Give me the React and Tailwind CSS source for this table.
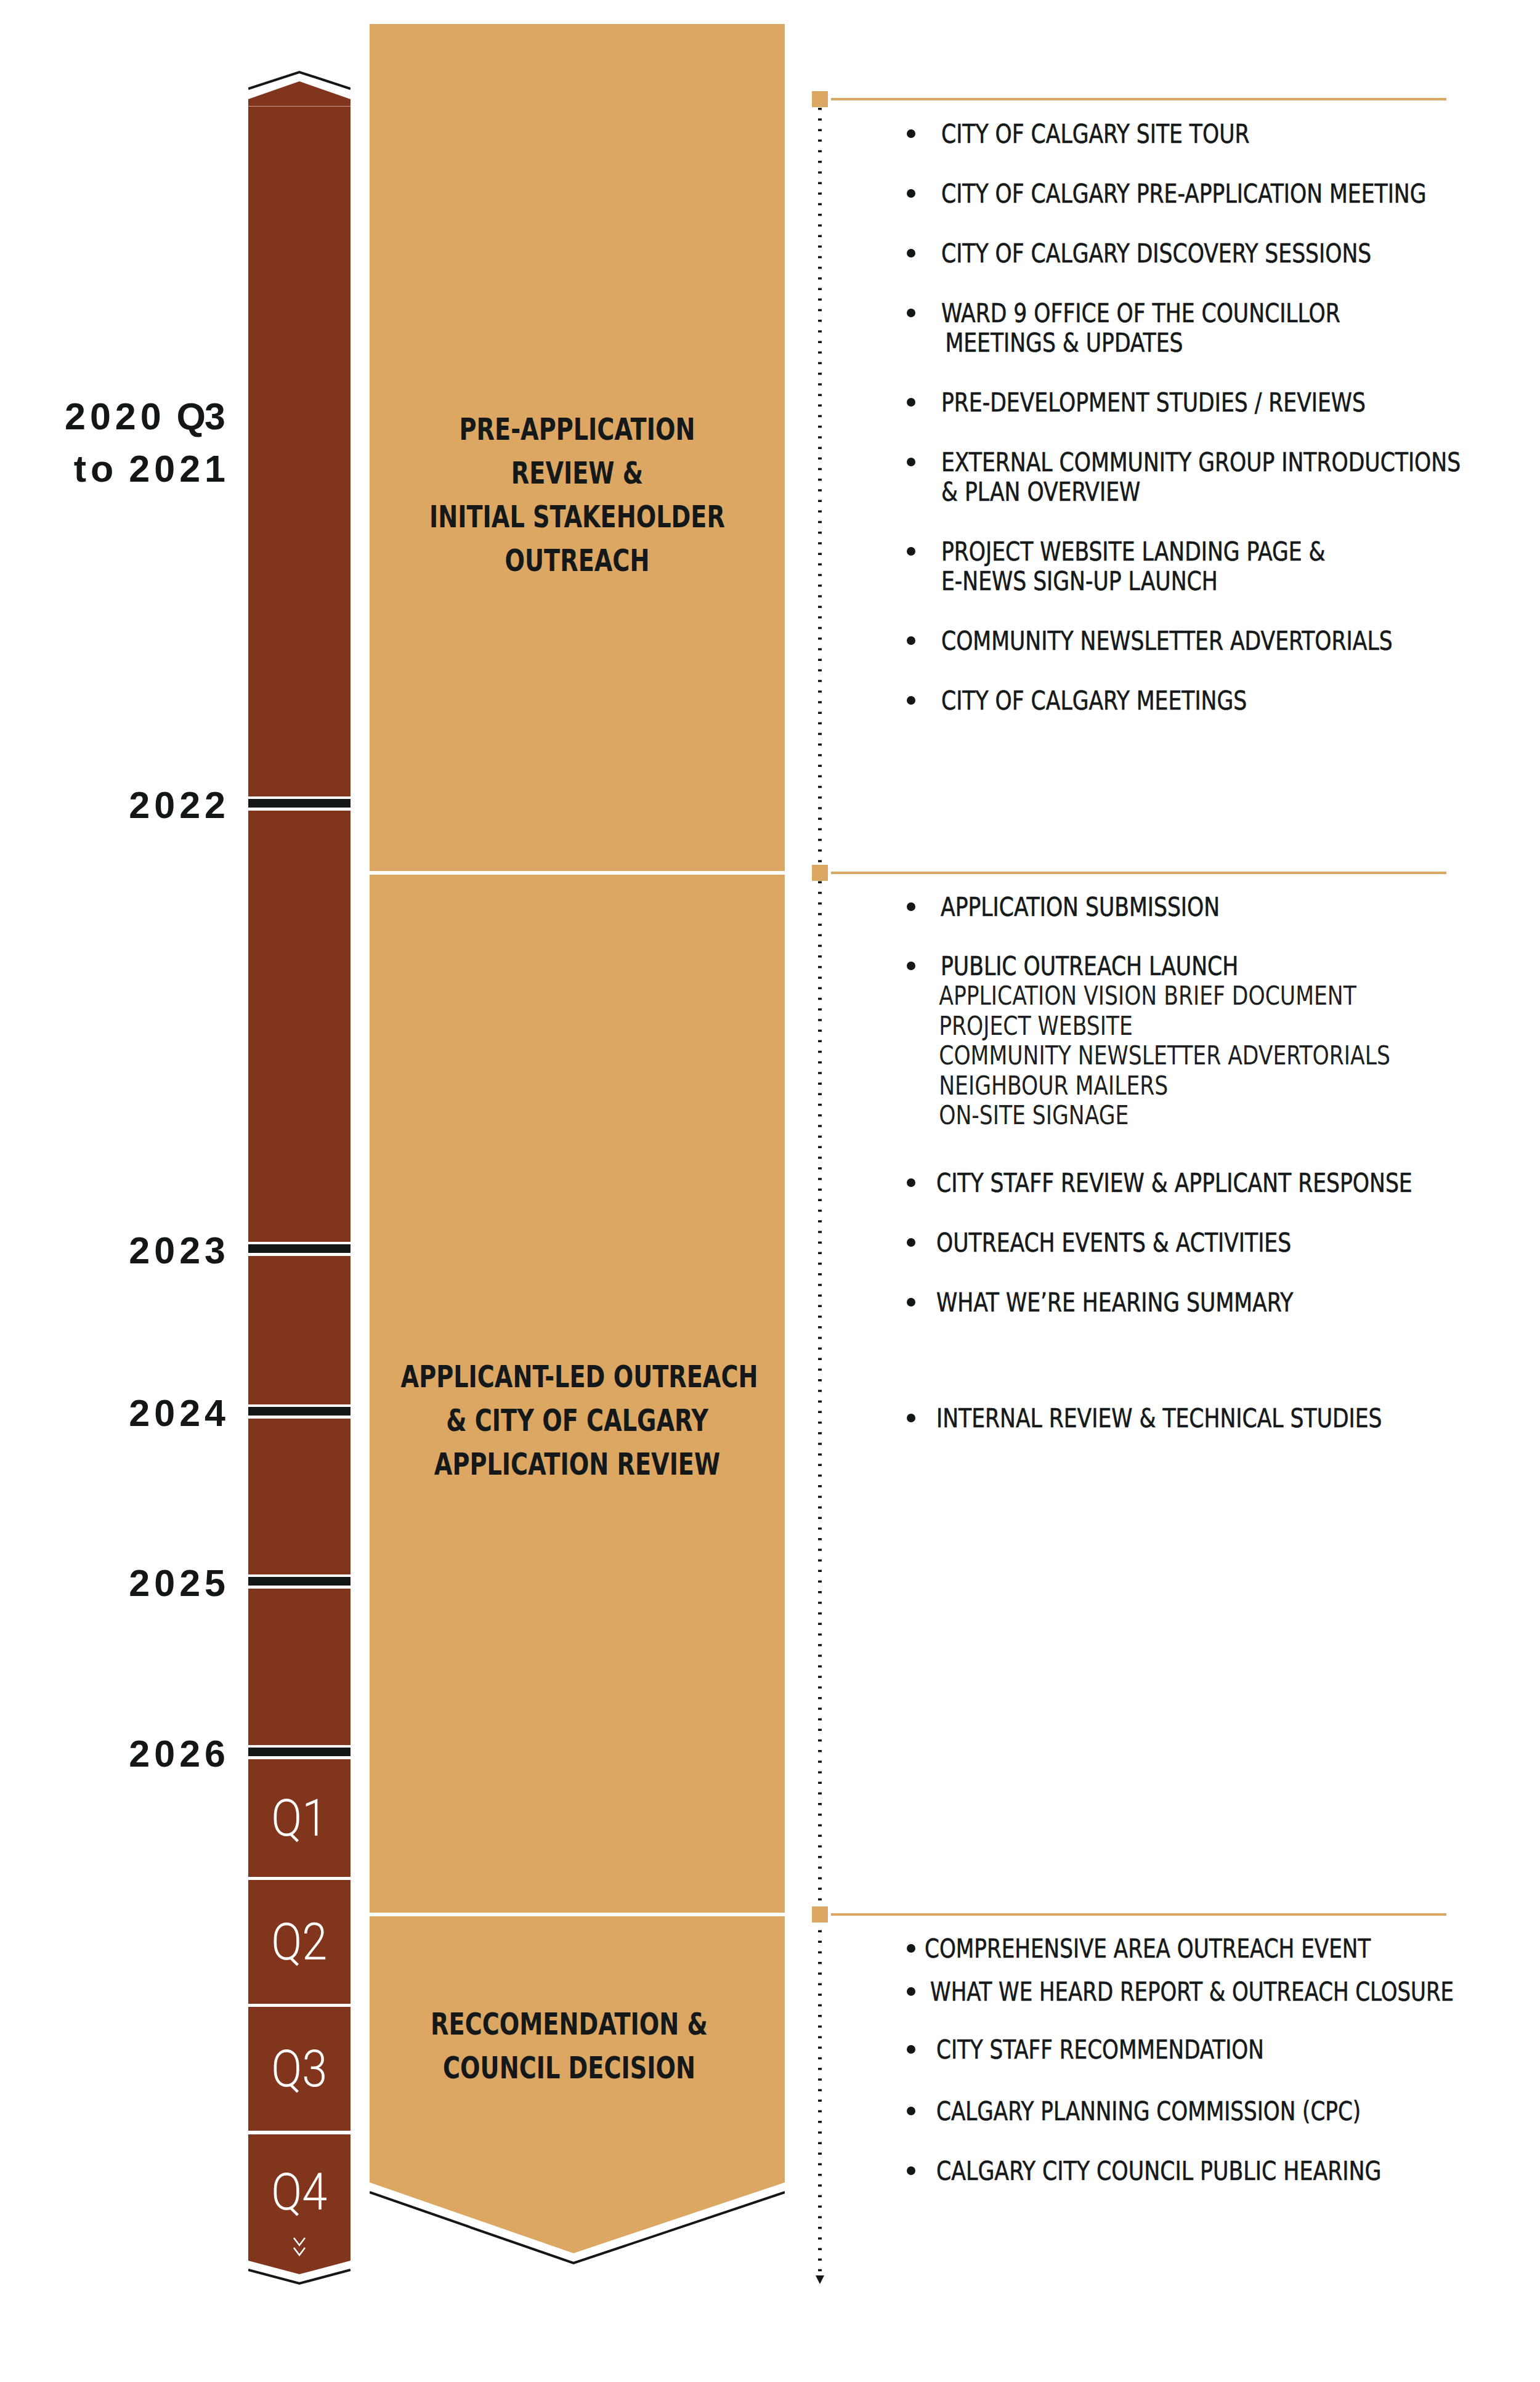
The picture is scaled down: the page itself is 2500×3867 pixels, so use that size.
import React from "react";

const yearBase =
  "font-[family-name:'Liberation_Sans',sans-serif] font-bold text-[61px] tracking-[7px] text-[#131718] whitespace-nowrap";
const headFont =
  "font-[family-name:'Liberation_Sans_Narrow','DejaVu_Sans_Condensed','Liberation_Sans',sans-serif] font-bold text-[50px] leading-[71px] text-[#141819] text-center whitespace-nowrap";
const itemFont =
  "font-[family-name:'Liberation_Sans_Narrow','DejaVu_Sans_Condensed','Liberation_Sans',sans-serif] text-[42px] leading-[48px] text-[#15191a] whitespace-nowrap [-webkit-text-stroke:0.6px_#15191a]";
const subFont =
  "font-[family-name:'Liberation_Sans_Narrow','DejaVu_Sans_Condensed','Liberation_Sans',sans-serif] text-[42px] leading-[48.5px] text-[#1d2021] whitespace-nowrap";
const qFont =
  "font-[family-name:Roboto,'DejaVu_Sans_Condensed',sans-serif] font-light text-[84px] leading-none text-white scale-x-[0.88]";

function Tick({ label }) {
  return (
    <div className="relative h-[23px] pt-[4px]">
      <div className="h-[14px] bg-[#131718]" />
      {label && (
        <div
          className={`absolute right-[calc(100%+30px)] top-[calc(50%+2px)] -translate-y-1/2 leading-none ${yearBase}`}
        >
          {label}
        </div>
      )}
    </div>
  );
}

function Item({ mt, tx, lines, sx = "scale-x-[0.915]" }) {
  return (
    <div className={`flex ${mt}`}>
      <div className="ml-[154px] mt-[16px] h-[14px] w-[14px] shrink-0 rounded-full bg-[#131718]" />
      <div className={`${tx} origin-left ${sx} ${itemFont}`}>
        {lines.map((l, i) => (
          <div key={i}>{l}</div>
        ))}
      </div>
    </div>
  );
}

function Header() {
  return (
    <div className="flex h-[26px] items-center">
      <div className="relative h-[26px] w-[26px] bg-[#dba763]" />
      <div className="ml-[5px] h-[4px] w-[999px] bg-[#dba763]" />
    </div>
  );
}

export default function App() {
  return (
    <div className="flex h-[3867px] w-[2500px] items-start overflow-hidden bg-white pl-[403px]">
      {/* Timeline bar */}
      <div className="mt-[113px] w-[166px] shrink-0">
        <svg width="166" height="60" viewBox="0 0 166 60" className="block">
          <polyline
            points="0,31 83,4 166,31"
            fill="none"
            stroke="#131718"
            strokeWidth="4"
          />
          <polygon points="0,48 83,19 166,48 166,59 0,59" fill="#80351c" />
          <rect x="0" y="59" width="166" height="1" fill="#c99c88" />
        </svg>
        <div className="relative h-[1120px] bg-[#80351c]">
          <div
            className={`absolute right-[calc(100%+30px)] top-[461px] text-right leading-[85px] [word-spacing:-6px] ${yearBase}`}
          >
            <div>
              2020 <span className="tracking-[-2px]">Q</span>3
            </div>
            <div>to 2021</div>
          </div>
        </div>
        <Tick label="2022" />
        <div className="h-[700px] bg-[#80351c]" />
        <Tick label="2023" />
        <div className="h-[241px] bg-[#80351c]" />
        <Tick label="2024" />
        <div className="h-[253px] bg-[#80351c]" />
        <Tick label="2025" />
        <div className="h-[254px] bg-[#80351c]" />
        <Tick label="2026" />
        <div className="flex h-[191px] items-center justify-center bg-[#80351c]">
          <div className={qFont}>Q1</div>
        </div>
        <div className="mt-[5px] flex h-[201px] items-center justify-center bg-[#80351c]">
          <div className={qFont}>Q2</div>
        </div>
        <div className="mt-[5px] flex h-[201px] items-center justify-center bg-[#80351c]">
          <div className={qFont}>Q3</div>
        </div>
        <div className="mt-[6px] flex h-[205px] flex-col items-center bg-[#80351c] pt-[52px]">
          <div className={qFont}>Q4</div>
          <svg width="24" height="32" viewBox="0 0 24 32" className="mt-[30px] block">
            <polyline points="3,2 12,14 21,2" fill="none" stroke="#ffffff" strokeWidth="2.5" />
            <polyline points="3,18 12,30 21,18" fill="none" stroke="#ffffff" strokeWidth="2.5" />
          </svg>
        </div>
        <svg width="166" height="42" viewBox="0 0 166 42" className="block">
          <polygon points="0,0 166,0 83,22" fill="#80351c" />
          <polyline
            points="0,15 83,37 166,15"
            fill="none"
            stroke="#131718"
            strokeWidth="4"
          />
        </svg>
      </div>

      {/* Phase column */}
      <div className="ml-[31px] mt-[39px] flex w-[674px] shrink-0 flex-col">
        <div className="h-[1375px] bg-[#dba763] pt-[623px]">
          <div className={`scale-x-[0.85] ${headFont}`}>
            <div>PRE-APPLICATION</div>
            <div>REVIEW &amp;</div>
            <div>INITIAL STAKEHOLDER</div>
            <div>OUTREACH</div>
          </div>
        </div>
        <div className="mt-[6px] h-[1685px] bg-[#dba763] pt-[780px]">
          <div className={`scale-x-[0.85] ${headFont}`}>
            <div>APPLICANT-LED OUTREACH</div>
            <div>&amp; CITY OF CALGARY</div>
            <div>APPLICATION REVIEW</div>
          </div>
        </div>
        <div className="mt-[6px] h-[432px] bg-[#dba763] pr-[26px] pt-[140px]">
          <div className={`scale-x-[0.85] ${headFont}`}>
            <div>RECCOMENDATION &amp;</div>
            <div>COUNCIL DECISION</div>
          </div>
        </div>
        <svg width="674" height="136" viewBox="0 0 674 136" className="block">
          <polygon points="0,0 674,0 331,115" fill="#dba763" />
          <polyline
            points="0,16 331,131 674,16"
            fill="none"
            stroke="#131718"
            strokeWidth="4"
          />
        </svg>
      </div>

      {/* Activities column */}
      <div className="relative ml-[44px] mt-[148px] w-[1182px] shrink-0">
        <svg
          width="16"
          height="3536"
          viewBox="0 0 16 3536"
          className="absolute left-[5px] top-[27px]"
        >
          <line
            x1="8"
            y1="0"
            x2="8"
            y2="3518"
            stroke="#131718"
            strokeWidth="6"
            strokeDasharray="3.5 13.7"
          />
          <polygon points="1,3519 15,3519 8,3533" fill="#131718" />
        </svg>

        <div className="h-[1256px]">
          <Header />
          <Item mt="mt-[20px]" tx="ml-[42px]" lines={["CITY OF CALGARY SITE TOUR"]} />
          <Item mt="mt-[49px]" tx="ml-[42px]" lines={["CITY OF CALGARY PRE-APPLICATION MEETING"]} />
          <Item mt="mt-[49px]" tx="ml-[42px]" lines={["CITY OF CALGARY DISCOVERY SESSIONS"]} />
          <Item
            mt="mt-[49px]"
            tx="ml-[42px]"
            lines={[
              "WARD 9 OFFICE OF THE COUNCILLOR",
              <span key="a" className="pl-[7px]">MEETINGS &amp; UPDATES</span>,
            ]}
          />
          <Item mt="mt-[49px]" tx="ml-[42px]" lines={["PRE-DEVELOPMENT STUDIES / REVIEWS"]} />
          <Item
            mt="mt-[49px]"
            tx="ml-[42px]"
            lines={["EXTERNAL COMMUNITY GROUP INTRODUCTIONS", "& PLAN OVERVIEW"]}
          />
          <Item
            mt="mt-[49px]"
            tx="ml-[42px]"
            lines={["PROJECT WEBSITE LANDING PAGE &", "E-NEWS SIGN-UP LAUNCH"]}
          />
          <Item mt="mt-[49px]" tx="ml-[42px]" lines={["COMMUNITY NEWSLETTER ADVERTORIALS"]} />
          <Item mt="mt-[49px]" tx="ml-[42px]" lines={["CITY OF CALGARY MEETINGS"]} />
        </div>

        <div className="h-[1691px]">
          <Header />
          <Item mt="mt-[19px]" tx="ml-[41px]" lines={["APPLICATION SUBMISSION"]} />
          <div className="mt-[48px] flex">
            <div className="ml-[154px] mt-[16px] h-[14px] w-[14px] shrink-0 rounded-full bg-[#131718]" />
            <div className="ml-[41px] origin-left scale-x-[0.915]">
              <div className={itemFont}>PUBLIC OUTREACH LAUNCH</div>
              <div className={`-ml-[3px] ${subFont}`}>
                <div>APPLICATION VISION BRIEF DOCUMENT</div>
                <div>PROJECT WEBSITE</div>
                <div>COMMUNITY NEWSLETTER ADVERTORIALS</div>
                <div>NEIGHBOUR MAILERS</div>
                <div>ON-SITE SIGNAGE</div>
              </div>
            </div>
          </div>
          <Item mt="mt-[61px]" tx="ml-[34px]" lines={["CITY STAFF REVIEW & APPLICANT RESPONSE"]} />
          <Item mt="mt-[49px]" tx="ml-[34px]" lines={["OUTREACH EVENTS & ACTIVITIES"]} />
          <Item mt="mt-[49px]" tx="ml-[34px]" lines={["WHAT WE\u2019RE HEARING SUMMARY"]} />
          <Item mt="mt-[140px]" tx="ml-[34px]" lines={["INTERNAL REVIEW & TECHNICAL STUDIES"]} />
        </div>

        <div>
          <Header />
          <Item mt="mt-[19px]" tx="ml-[15px]" sx="scale-x-[0.905]" lines={["COMPREHENSIVE AREA OUTREACH EVENT"]} />
          <Item mt="mt-[22px]" tx="ml-[24px]" sx="scale-x-[0.9]" lines={["WHAT WE HEARD REPORT & OUTREACH CLOSURE"]} />
          <Item mt="mt-[46px]" tx="ml-[34px]" sx="scale-x-[0.905]" lines={["CITY STAFF RECOMMENDATION"]} />
          <Item mt="mt-[52px]" tx="ml-[34px]" sx="scale-x-[0.905]" lines={["CALGARY PLANNING COMMISSION (CPC)"]} />
          <Item mt="mt-[49px]" tx="ml-[34px]" sx="scale-x-[0.92]" lines={["CALGARY CITY COUNCIL PUBLIC HEARING"]} />
        </div>
      </div>
    </div>
  );
}
